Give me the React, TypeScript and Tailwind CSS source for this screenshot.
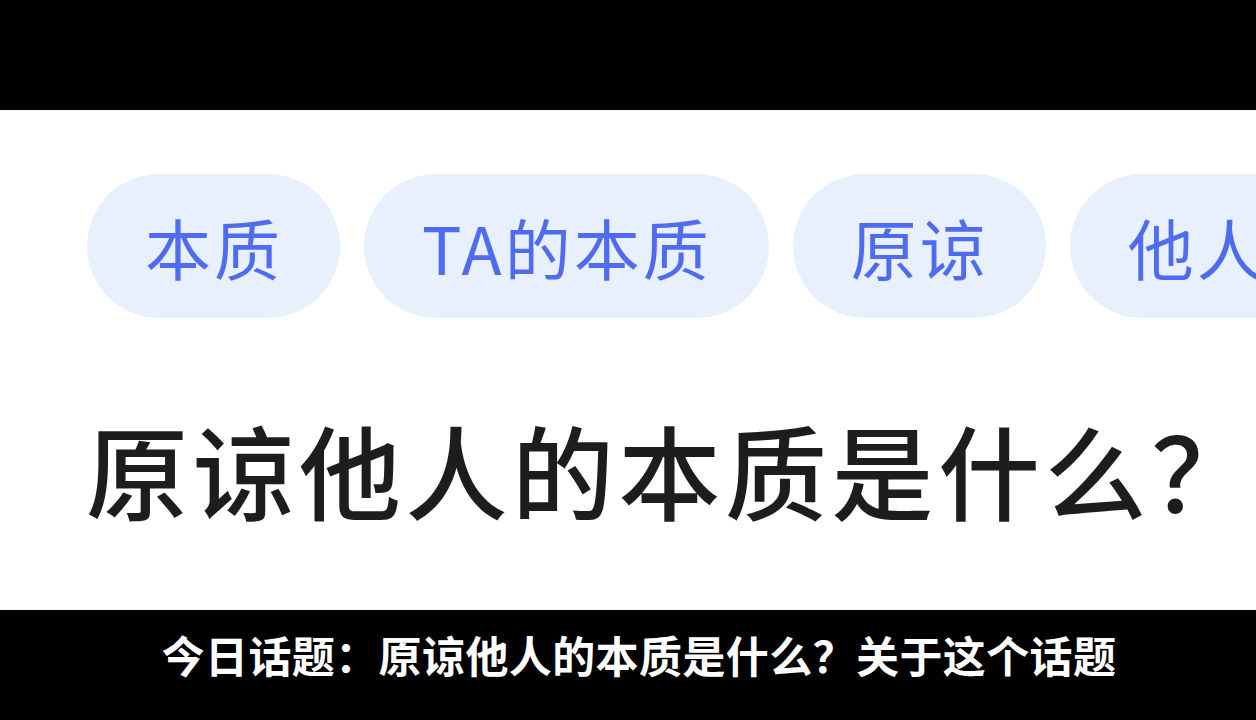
export default function App() {
  const tags = ["本质", "TA的本质", "原谅", "他人的本质"];
  return (
    <div
      className="w-[1256px] h-[720px] bg-black flex flex-col overflow-hidden"
      style={{ fontFamily: '"Noto Sans CJK SC", "Noto Sans", sans-serif' }}
    >
      <div className="h-[110px] shrink-0 bg-black" />
      <div className="h-[500px] shrink-0 bg-white flex flex-col">
        <div className="flex gap-[24px] pl-[87px] pt-[64px] overflow-hidden whitespace-nowrap">
          {tags.map((t) => (
            <div
              key={t}
              className="shrink-0 h-[144px] pl-[58px] pr-[57px] rounded-full bg-[#e8f0fd] flex items-center text-[66px] leading-none tracking-[3px] text-[#4f6cf0]"
            >
              {t}
            </div>
          ))}
        </div>
        <div className="pl-[86px] pt-[100px] text-[102px] leading-none font-medium tracking-[4.5px] text-[#1d1d1d] whitespace-nowrap">
          原谅他人的本质是什么？
        </div>
      </div>
      <div className="flex-1 bg-black flex items-center justify-center pl-[22px]">
        <div className="text-white text-[43px] font-bold leading-none tracking-[0.4px] whitespace-nowrap pb-[22px]">
          今日话题：原谅他人的本质是什么？关于这个话题
        </div>
      </div>
    </div>
  );
}
